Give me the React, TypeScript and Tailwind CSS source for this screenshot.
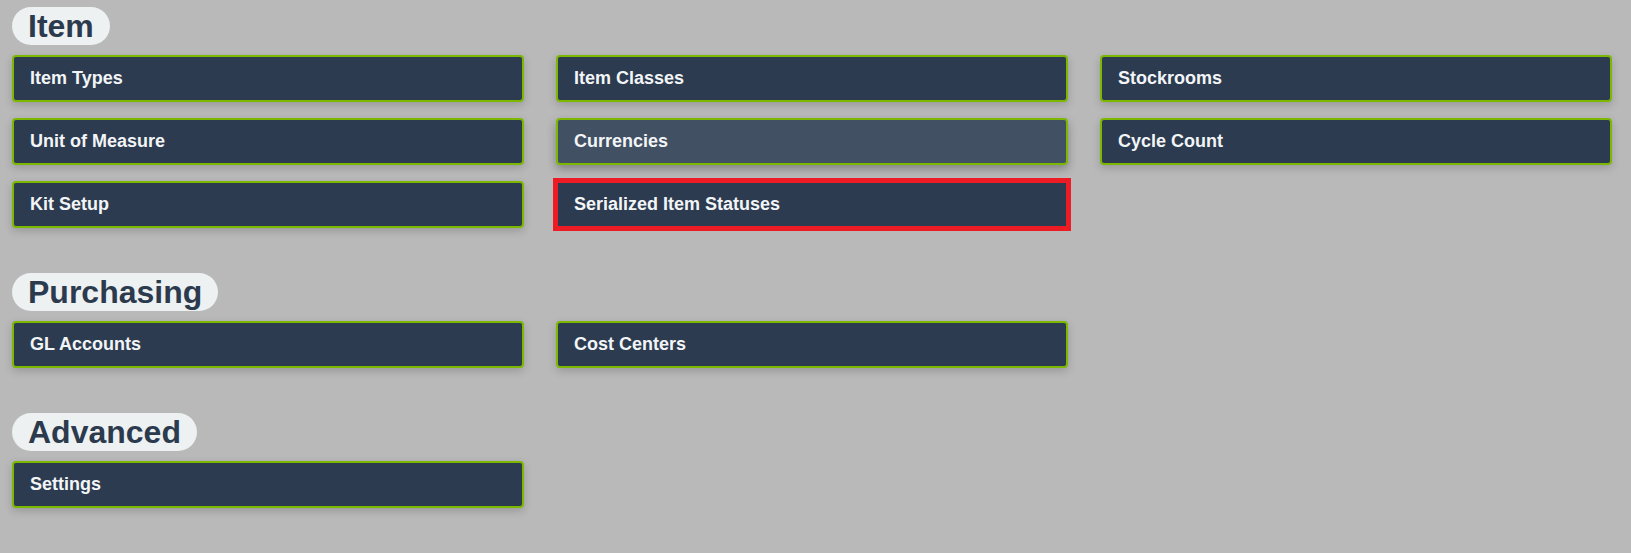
import React from 'react';

type Tile = { label: string; state?: 'hover' | 'selected' };

const sections: { title: string; tiles: Tile[] }[] = [
  {
    title: 'Item',
    tiles: [
      { label: 'Item Types' },
      { label: 'Item Classes' },
      { label: 'Stockrooms' },
      { label: 'Unit of Measure' },
      { label: 'Currencies', state: 'hover' },
      { label: 'Cycle Count' },
      { label: 'Kit Setup' },
      { label: 'Serialized Item Statuses', state: 'selected' },
    ],
  },
  {
    title: 'Purchasing',
    tiles: [{ label: 'GL Accounts' }, { label: 'Cost Centers' }],
  },
  {
    title: 'Advanced',
    tiles: [{ label: 'Settings' }],
  },
];

function SetupTile({ label, state }: Tile) {
  if (state === 'selected') {
    return (
      <button className="flex h-[47px] items-center border-2 border-[#ed1c24] bg-[#2c3b4f] pl-4 text-left text-[18px] font-bold text-[#f2f5f7] outline-[3px] outline-solid outline-[#ed1c24]">
        {label}
      </button>
    );
  }
  return (
    <button
      className={
        'flex h-[47px] items-center rounded-[4px] border-2 border-[#7cb800] pl-4 text-left text-[18px] font-bold text-[#f2f5f7] ' +
        (state === 'hover'
          ? 'bg-[#415063] shadow-[0_4px_10px_rgba(0,0,0,0.3)]'
          : 'bg-[#2c3b4f] shadow-[0_3px_8px_rgba(0,0,0,0.18)]')
      }
    >
      {label}
    </button>
  );
}

export default function App() {
  return (
    <div
      className="min-h-[553px] w-full bg-[#b9b9b9] pl-3 pt-[7px]"
      style={{ fontFamily: '"Liberation Sans", Arial, sans-serif' }}
    >
      <div className="flex flex-col gap-[45px]">
        {sections.map((s) => (
          <section key={s.title}>
            <div className="mb-[10px] flex">
              <h2 className="flex h-[38px] items-center rounded-full bg-[#edf1f2] px-4 text-[32px] font-bold text-[#2c3a4e]">
                {s.title}
              </h2>
            </div>
            <div className="grid grid-cols-[512px_512px_512px] gap-x-8 gap-y-4">
              {s.tiles.map((t) => (
                <SetupTile key={t.label} {...t} />
              ))}
            </div>
          </section>
        ))}
      </div>
    </div>
  );
}
